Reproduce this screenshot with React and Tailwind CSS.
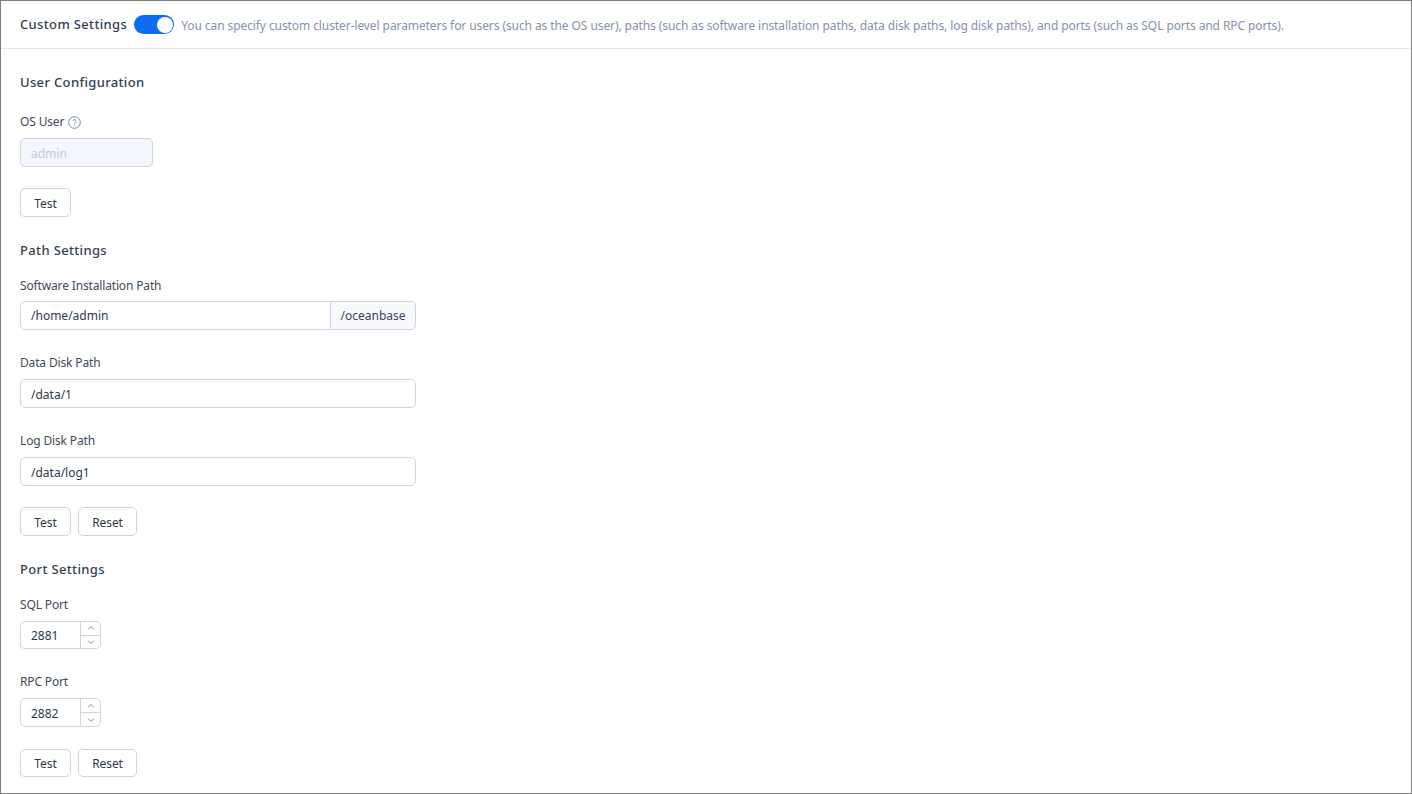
import React from 'react';

const Label = ({ children, className = '' }) => (
  <div className={`h-[18px] leading-[18px] text-[12px] tracking-[-0.15px] text-[#3f4a60] flex items-center gap-1 ${className}`}>{children}</div>
);

const SectionTitle = ({ children, className = '' }) => (
  <div className={`h-5 leading-5 text-[13px] font-medium text-[#333e54] tracking-[0.35px] ${className}`}>{children}</div>
);

const Btn = ({ children, width, height = 'h-[29px]' }) => (
  <button className={`${width} ${height} pt-[2px] rounded-[5px] border border-[#cdd5e4] bg-white text-[12px] tracking-[-0.1px] text-[#2f3a4f] flex items-center justify-center`}>
    {children}
  </button>
);

const TextBox = ({ value }) => (
  <div className="w-[396px] h-[29px] pt-[2px] rounded-[5px] border border-[#cdd5e4] bg-white px-[10px] flex items-center text-[12px] text-[#2f3a4f]">
    {value}
  </div>
);

const NumberBox = ({ value, height }) => (
  <div className={`w-[81px] ${height} rounded-[5px] border border-[#cdd5e4] bg-white flex items-center text-[12px] text-[#2f3a4f]`}>
    <div className="flex-1 px-[10px] pt-[2px]">{value}</div>
    <div className="w-5 h-full border-l border-[#cdd5e4] flex flex-col">
      <div className="flex-1 flex items-center justify-center border-b border-[#cdd5e4]">
        <svg width="8" height="6" viewBox="0 0 8 6" fill="none" stroke="#8592ad" strokeWidth="1"><path d="M1 4.5 4 1.5 7 4.5" /></svg>
      </div>
      <div className="flex-1 flex items-center justify-center">
        <svg width="8" height="6" viewBox="0 0 8 6" fill="none" stroke="#8592ad" strokeWidth="1"><path d="M1 1.5 4 4.5 7 1.5" /></svg>
      </div>
    </div>
  </div>
);

const App = () => {
  return (
    <div className="w-[1412px] h-[794px] overflow-hidden bg-white border border-[#7f7f7f] font-['Noto_Sans','Open_Sans',sans-serif]">
      {/* Header */}
      <div className="h-[48px] border-b border-[#e2e8f3] px-[19px] flex items-center">
        <span className="text-[13px] font-medium text-[#333e54] tracking-[0.35px]">Custom Settings</span>
        <div className="ml-[7px] w-10 h-[19px] rounded-full bg-[#0d6cf2] flex items-center justify-end pr-[1px]">
          <div className="w-[16px] h-[16px] rounded-full bg-white" />
        </div>
        <span className="ml-[7px] pt-[2px] text-[12px] tracking-[-0.088px] text-[#8592ad]">
          You can specify custom cluster-level parameters for users (such as the OS user), paths (such as software installation paths, data disk paths, log disk paths), and ports (such as SQL ports and RPC ports).
        </span>
      </div>

      <div className="px-[19px]">
        <SectionTitle className="mt-[23px]">User Configuration</SectionTitle>

        <Label className="mt-[21px]">
          OS User
          <svg width="13" height="13" viewBox="0 0 13 13" fill="none" stroke="#7d8aa6" strokeWidth="1">
            <circle cx="6.5" cy="6.5" r="5.8" />
            <path d="M4.9 5.1a1.6 1.6 0 1 1 2.5 1.4c-.6.3-.9.7-.9 1.2" />
            <path d="M6.5 8.9v.8" />
          </svg>
        </Label>
        <div className="mt-[7px] w-[133px] h-[29px] rounded-[5px] border border-[#cdd5e4] bg-[#f3f6fc] px-[10px] pt-[2px] flex items-center text-[12px] text-[#c1cbe0]">
          admin
        </div>
        <div className="mt-[21px] flex gap-2">
          <Btn width="w-[51px]">Test</Btn>
        </div>

        <SectionTitle className="mt-[23px]">Path Settings</SectionTitle>

        <Label className="mt-[17px]">Software Installation Path</Label>
        <div className="mt-[6px] w-[396px] h-[29px] flex text-[12px] text-[#2f3a4f]">
          <div className="flex-1 rounded-l-[5px] border border-[#cdd5e4] bg-white px-[10px] flex items-center">/home/admin</div>
          <div className="w-[85px] rounded-r-[5px] border border-l-0 border-[#cdd5e4] bg-[#f8fafe] flex items-center justify-center text-[#3a4459]">/oceanbase</div>
        </div>

        <Label className="mt-[24px]">Data Disk Path</Label>
        <div className="mt-[7px]"><TextBox value="/data/1" /></div>

        <Label className="mt-[24px]">Log Disk Path</Label>
        <div className="mt-[7px]"><TextBox value="/data/log1" /></div>

        <div className="mt-[21px] flex gap-[7px]">
          <Btn width="w-[51px]">Test</Btn>
          <Btn width="w-[59px]">Reset</Btn>
        </div>

        <SectionTitle className="mt-[23px]">Port Settings</SectionTitle>

        <Label className="mt-[17px]">SQL Port</Label>
        <div className="mt-[7px]"><NumberBox value="2881" height="h-[28px]" /></div>

        <Label className="mt-[24px]">RPC Port</Label>
        <div className="mt-[7px]"><NumberBox value="2882" height="h-[29px]" /></div>

        <div className="mt-[22px] flex gap-[7px]">
          <Btn width="w-[51px]" height="h-[28px]">Test</Btn>
          <Btn width="w-[59px]" height="h-[28px]">Reset</Btn>
        </div>
      </div>
    </div>
  );
};

export default App;
